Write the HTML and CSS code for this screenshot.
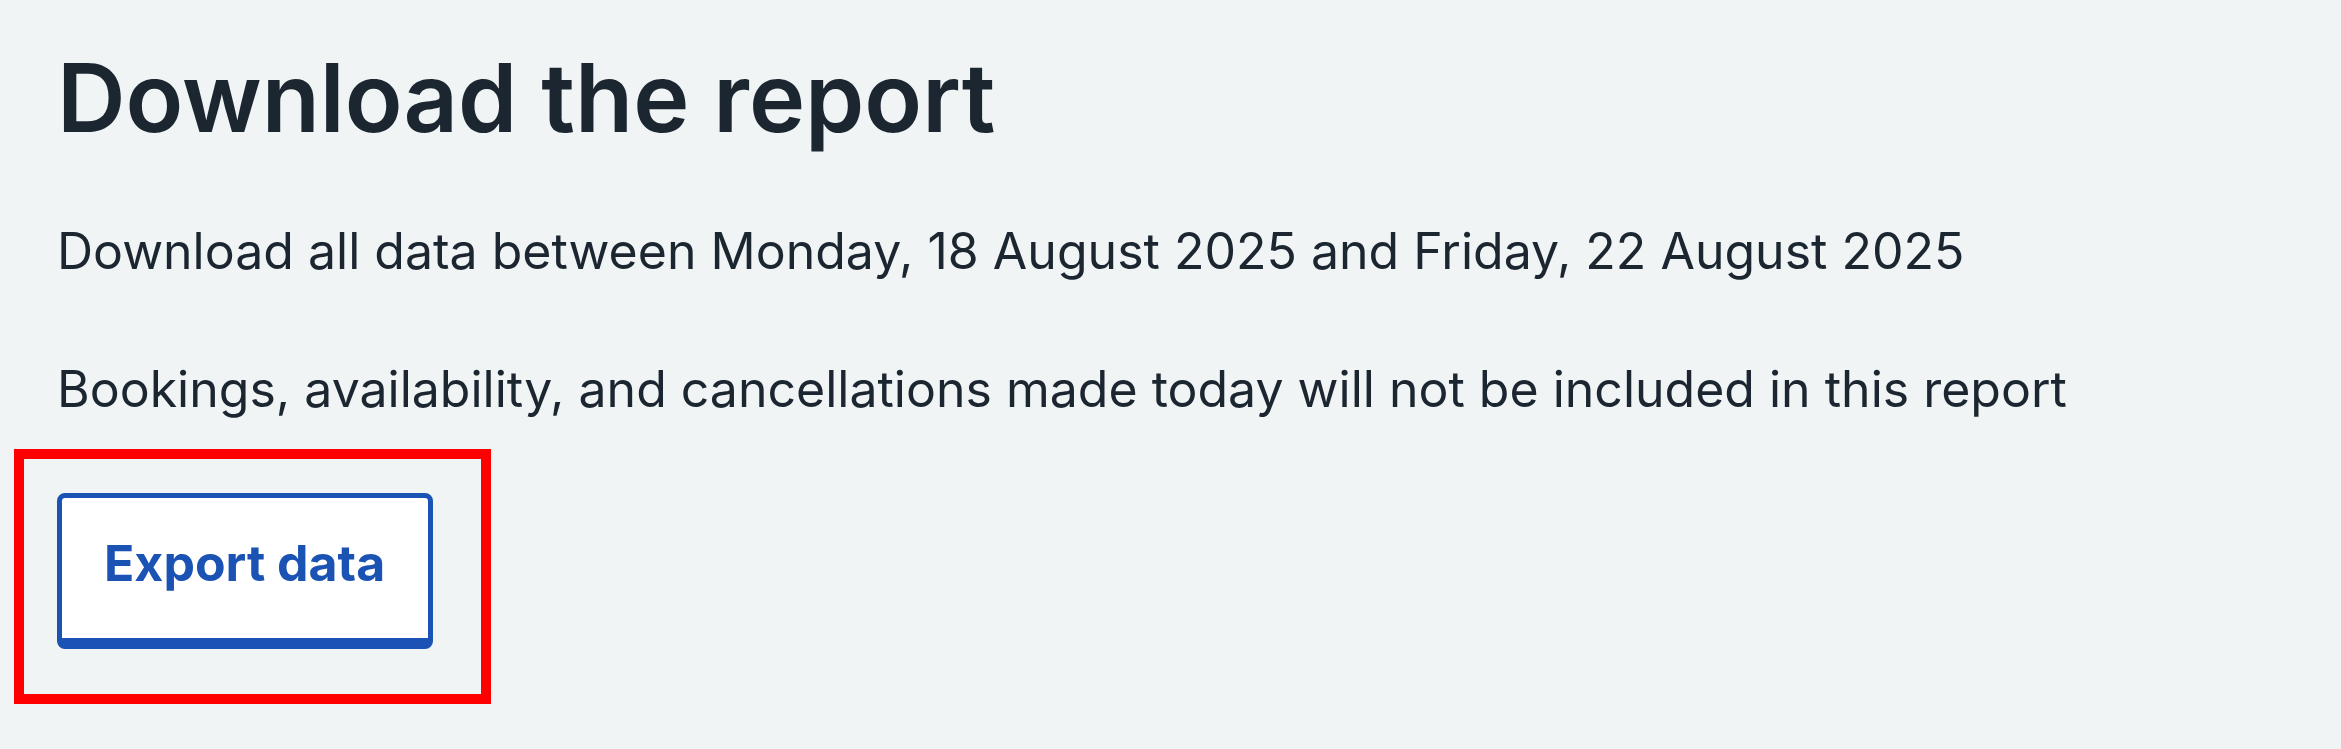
FILE: index.html
```html
<!DOCTYPE html>
<html lang="en">
<head>
  <meta charset="utf-8">
  <title>Download the report</title>
  <link rel="stylesheet" href="styles.css">
</head>
<body>
  <div class="report">
    <h1>Download the report</h1>
    <p class="period">Download all data between Monday, 18 August 2025 and Friday, 22 August 2025</p>
    <p class="note">Bookings, availability, and cancellations made today will not be included in this report</p>
    <div class="actions">
      <button class="exportBtn" type="button">Export data</button>
    </div>
  </div>
  <div class="highlight"></div>
</body>
</html>
```

FILE: styles.css
```css
html {
  font-family: Inter, "Noto Sans", sans-serif;
}
body {
  margin: 0;
  background: #f0f4f5;
  color: #1c2630;
  position: relative;
  height: 749px;
  overflow: hidden;
}
.report {
  padding: 40px 0 0 57px;
  display: flex;
  flex-direction: column;
  align-items: flex-start;
}
h1 {
  margin: 0;
  font-size: 95px;
  line-height: 115px;
  font-weight: 600;
}
p {
  margin: 0;
  font-size: 50px;
  line-height: 62px;
}
.period {
  margin-top: 65px;
}
.note {
  margin-top: 76px;
}
.actions {
  margin-top: 73px;
}
.exportBtn {
  font-family: inherit;
  font-size: 50px;
  line-height: 62px;
  font-weight: 700;
  color: #1a53b3;
  background: #fff;
  border: 5px solid #1a53b3;
  border-bottom-width: 11px;
  border-radius: 8px;
  padding: 34px 43px 44px 42px;
  cursor: pointer;
}
.highlight {
  position: absolute;
  left: 14px;
  top: 449px;
  width: 477px;
  height: 255px;
  box-sizing: border-box;
  border: 10px solid #ff0000;
}
```
